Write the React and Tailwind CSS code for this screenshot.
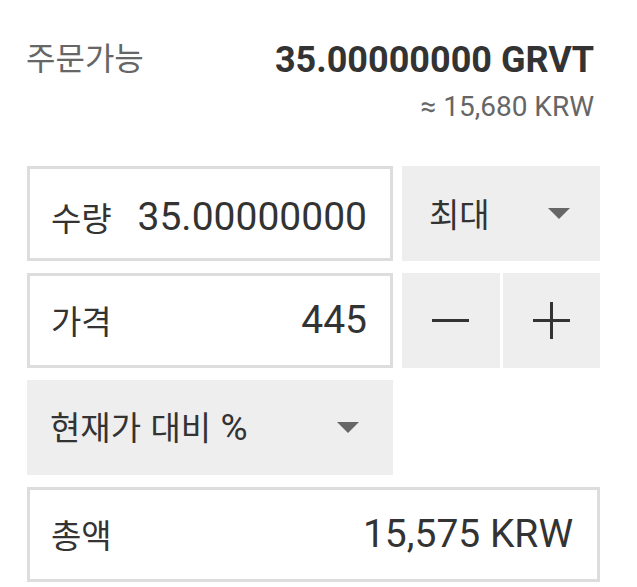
import React from "react";

const kr = "font-[family-name:'Noto_Sans_CJK_KR',sans-serif]";
const num = "font-[family-name:Roboto,'Noto_Sans_CJK_KR',sans-serif]";

function Caret() {
  return (
    <svg width="22" height="11" viewBox="0 0 22 11" className="shrink-0">
      <polygon points="0,0 22,0 11,11" fill="#666" />
    </svg>
  );
}

function Minus() {
  return (
    <svg width="37" height="37" viewBox="0 0 37 37">
      <rect x="0" y="17" width="37" height="3" fill="#333" />
    </svg>
  );
}

function Plus() {
  return (
    <svg width="37" height="37" viewBox="0 0 37 37">
      <rect x="0" y="17" width="37" height="3" fill="#333" />
      <rect x="17" y="0" width="3" height="37" fill="#333" />
    </svg>
  );
}

export default function App() {
  return (
    <div className="w-[637px] h-[587px] bg-white pl-[27px] pr-[37px] pt-[40px] text-[#333] overflow-hidden">
      {/* 주문가능 */}
      <div className="flex justify-between items-start">
        <span className={`${kr} text-[32px] leading-[32px] text-[#666] -ml-[1px]`}>주문가능</span>
        <div className="text-right mt-[2px] pr-[6px]">
          <div className={`${num} text-[36px] leading-[36px] font-bold text-[#333]`}>
            35.00000000 GRVT
          </div>
          <div className={`${num} text-[28px] leading-[28px] text-[#666] mt-[15px]`}>
            ≈ 15,680 KRW
          </div>
        </div>
      </div>

      <div className="grid grid-cols-[366px_198px] gap-x-[9px] gap-y-[12px] mt-[45px]">
        {/* 수량 */}
        <div className="h-[95px] border-[3px] border-[#ddd] flex items-center justify-between pl-[21px] pr-[23px] pt-[8px]">
          <span className={`${kr} text-[33px] leading-none`}>수량</span>
          <span className={`${num} text-[39px] leading-none`}>35.00000000</span>
        </div>
        <div className="h-[95px] bg-[#eee] flex items-center justify-between pl-[27px] pr-[30px]">
          <span className={`${kr} text-[33px] leading-none`}>최대</span>
          <Caret />
        </div>

        {/* 가격 */}
        <div className="h-[95px] border-[3px] border-[#ddd] flex items-center justify-between pl-[21px] pr-[23px]">
          <span className={`${kr} text-[33px] leading-none`}>가격</span>
          <span className={`${num} text-[39px] leading-none`}>445</span>
        </div>
        <div className="h-[95px] grid grid-cols-2 gap-x-[3px]">
          <button className="bg-[#eee] flex items-center justify-center">
            <Minus />
          </button>
          <button className="bg-[#eee] flex items-center justify-center">
            <Plus />
          </button>
        </div>

        {/* 현재가 대비 % */}
        <div className="h-[95px] bg-[#eee] flex items-center justify-between pl-[23px] pr-[34px]">
          <span className={`${kr} text-[33px] leading-none [word-spacing:2px]`}>
            현재가 대비 <span className={`${num} text-[37px]`}>%</span>
          </span>
          <Caret />
        </div>
        <div />

        {/* 총액 */}
        <div className="col-span-2 h-[95px] border-[3px] border-[#ddd] flex items-center justify-between pl-[21px] pr-[24px]">
          <span className={`${kr} text-[33px] leading-none`}>총액</span>
          <span className={`${num} text-[39px] leading-none`}>15,575 KRW</span>
        </div>
      </div>
    </div>
  );
}
